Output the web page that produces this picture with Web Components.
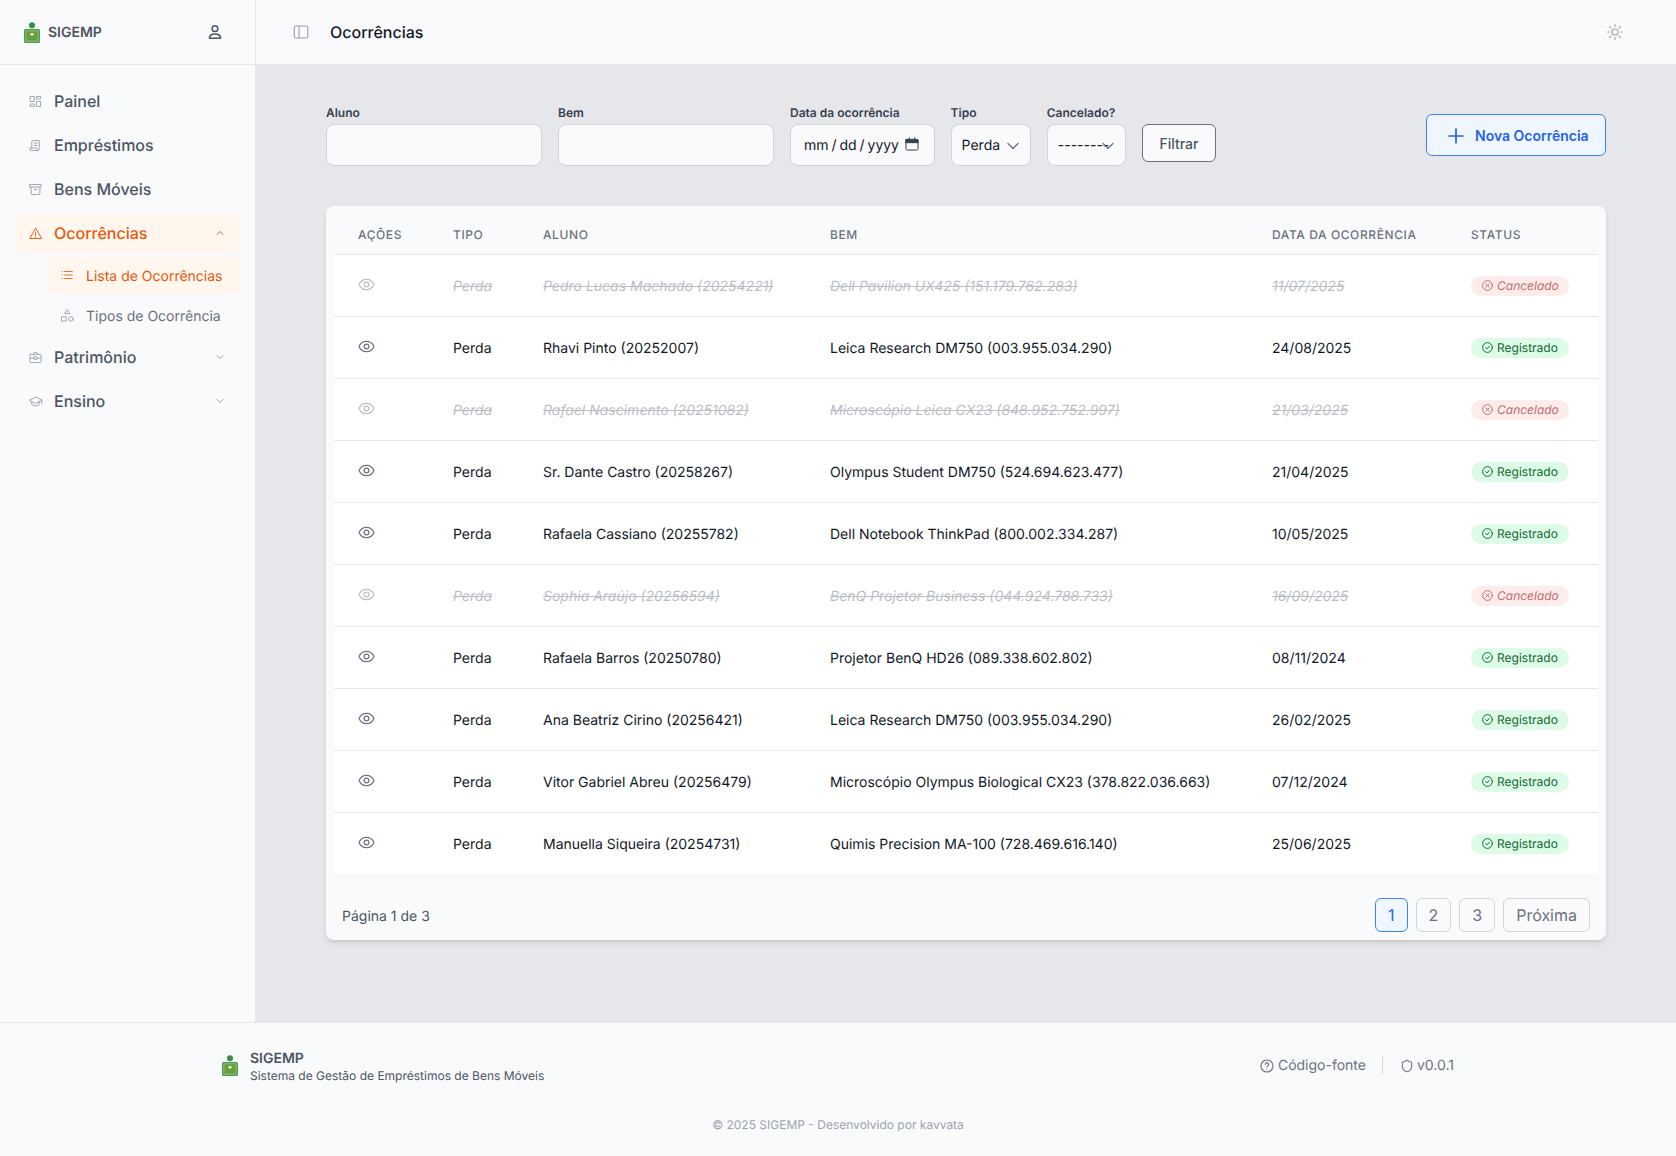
<!DOCTYPE html>
<html lang="pt-BR"><head><meta charset="utf-8"><title>Ocorrências</title>
<style>html,body{margin:0;padding:0;background:#e5e7eb;font-family:Inter,"Liberation Sans",sans-serif;color:#111827;text-rendering:geometricPrecision;-webkit-font-smoothing:antialiased}</style>
</head><body>
<app-shell>
  <side-bar slot="side">
    <nav-item icon="dash">Painel</nav-item>
    <nav-item icon="scroll">Empréstimos</nav-item>
    <nav-item icon="archive">Bens Móveis</nav-item>
    <nav-item icon="alert" active chevron="up">Ocorrências</nav-item>
    <nav-item icon="list" sub active>Lista de Ocorrências</nav-item>
    <nav-item icon="shapes" sub>Tipos de Ocorrência</nav-item>
    <nav-item icon="brief" chevron="down">Patrimônio</nav-item>
    <nav-item icon="cap" chevron="down">Ensino</nav-item>
  </side-bar>
  <top-bar slot="top" heading="Ocorrências"></top-bar>
  <filter-bar></filter-bar>
  <occ-table>
    <occ-row cancelled tipo="Perda" aluno="Pedro Lucas Machado (20254221)" bem="Dell Pavilion UX425 (151.179.762.283)" data="11/07/2025"></occ-row>
    <occ-row tipo="Perda" aluno="Rhavi Pinto (20252007)" bem="Leica Research DM750 (003.955.034.290)" data="24/08/2025"></occ-row>
    <occ-row cancelled tipo="Perda" aluno="Rafael Nascimento (20251082)" bem="Microscópio Leica CX23 (848.952.752.997)" data="21/03/2025"></occ-row>
    <occ-row tipo="Perda" aluno="Sr. Dante Castro (20258267)" bem="Olympus Student DM750 (524.694.623.477)" data="21/04/2025"></occ-row>
    <occ-row tipo="Perda" aluno="Rafaela Cassiano (20255782)" bem="Dell Notebook ThinkPad (800.002.334.287)" data="10/05/2025"></occ-row>
    <occ-row cancelled tipo="Perda" aluno="Sophia Araújo (20256594)" bem="BenQ Projetor Business (044.924.788.733)" data="16/09/2025"></occ-row>
    <occ-row tipo="Perda" aluno="Rafaela Barros (20250780)" bem="Projetor BenQ HD26 (089.338.602.802)" data="08/11/2024"></occ-row>
    <occ-row tipo="Perda" aluno="Ana Beatriz Cirino (20256421)" bem="Leica Research DM750 (003.955.034.290)" data="26/02/2025"></occ-row>
    <occ-row tipo="Perda" aluno="Vitor Gabriel Abreu (20256479)" bem="Microscópio Olympus Biological CX23 (378.822.036.663)" data="07/12/2024"></occ-row>
    <occ-row last tipo="Perda" aluno="Manuella Siqueira (20254731)" bem="Quimis Precision MA-100 (728.469.616.140)" data="25/06/2025"></occ-row>
  </occ-table>
  <app-footer slot="foot"></app-footer>
</app-shell>
<script>
const P={
dash:'<path d="M4 4h6v8H4zM4 16h6v4H4zM14 12h6v8h-6zM14 4h6v4h-6z"/>',
scroll:'<path d="M8 4h10a2 2 0 0 1 0 0v14a2 2 0 0 1-2 2H5a2 2 0 0 1-2-2v-2h11v2a2 2 0 0 0 2 2"/><path d="M8 4a2 2 0 0 0-2 2v10M10 8h5M10 12h5"/>',
archive:'<path d="M3 4h18v4H3zM5 8v11a1 1 0 0 0 1 1h12a1 1 0 0 0 1-1V8M10 12h4"/>',
alert:'<path d="M12 4 2.800 20h18.400zM12 10v5M12 17.600v.4"/>',
list:'<path d="M8 6h13M8 12h13M8 18h13M3.500 6h.5M3.500 12h.5M3.500 18h.5"/>',
shapes:'<path d="M12 3l4 6H8zM3 14h7v7H3z"/><circle cx="17.500" cy="17.500" r="3.500"/>',
brief:'<path d="M9 7V5a1 1 0 0 1 1-1h4a1 1 0 0 1 1 1v2M4 7h16a1 1 0 0 1 1 1v11a1 1 0 0 1-1 1H4a1 1 0 0 1-1-1V8a1 1 0 0 1 1-1zM3 13h6M15 13h6"/><rect x="9.500" y="11" width="5" height="4" rx=".5"/>',
cap:'<path d="M12 5 2 10l10 5 10-5zM6 12v5c2 2.500 10 2.500 12 0v-5M22 10v6"/>',
up:'<path d="m6 15 6-6 6 6"/>',down:'<path d="m6 9 6 6 6-6"/>',
user:'<circle cx="12" cy="7.500" r="3.800"/><path d="M4.500 20.200c0-3.500 2.600-5.700 7.500-5.700s7.500 2.200 7.500 5.700z"/>',
panel:'<rect x="3" y="4" width="18" height="16" rx="2"/><path d="M9.500 4v16"/>',
sun:'<circle cx="12" cy="12" r="4"/><path d="M12 2v2.500M12 19.500V22M2 12h2.500M19.500 12H22M4.900 4.900l1.800 1.800M17.300 17.300l1.800 1.800M4.900 19.100l1.800-1.800M17.300 6.700l1.800-1.800"/>',
eye:'<path d="M2.500 12C4.500 7.500 8 5.500 12 5.500s7.500 2 9.500 6.500c-2 4.500-5.500 6.500-9.500 6.500S4.500 16.500 2.500 12z"/><circle cx="12" cy="12" r="3"/>',
plus:'<path d="M12 3.500v17M3.500 12h17"/>',
xc:'<circle cx="12" cy="12" r="9"/><path d="m9 9 6 6M15 9l-6 6"/>',
ok:'<circle cx="12" cy="12" r="9"/><path d="m8.500 12.300 2.400 2.400 4.600-5"/>',
help:'<circle cx="12" cy="12" r="9"/><path d="M9.500 9.500a2.500 2.500 0 1 1 3.800 2.200c-.9.500-1.300 1-1.300 1.800M12 16.800v.2"/>',
shield:'<path d="M20 13c0 5-3.500 7.500-7.660 8.950a1 1 0 0 1-.67-.01C7.500 20.500 4 18 4 13V6a1 1 0 0 1 1-1c2 0 4.500-1.200 6.240-2.720a1.170 1.170 0 0 1 1.520 0C14.510 3.810 17 5 19 5a1 1 0 0 1 1 1z"/>',
cal:'<rect x="3" y="5" width="18" height="16" rx="2"/><path d="M3 5.500h18V10H3zM8 2.500V5M16 2.500V5" fill="currentColor"/>'
};
function def(name,css,render){
  customElements.define(name,class extends HTMLElement{
    connectedCallback(){
      if(this.shadowRoot)return;
      this.attachShadow({mode:'open'}).innerHTML='<style>'+css+'</style>'+render(this);
    }
  });
}
const a=(e,n)=>e.getAttribute(n)||'';
def('ui-icon',':host{display:inline-flex;flex:none;align-items:center;justify-content:center}svg{display:block;fill:none;stroke:currentColor;stroke-linecap:round;stroke-linejoin:round}',
 e=>{const s=a(e,'size')||16;return `<svg width="${s}" height="${s}" viewBox="0 0 24 24" stroke-width="${a(e,'w')||1.5}">${P[a(e,'name')]}</svg>`});
def('logo-mark',':host{display:inline-flex;flex:none}svg{display:block}',
 ()=>`<svg width="16" height="21" viewBox="0 0 16 21"><circle cx="8" cy="3.200" r="3" fill="#388e3c"/><rect x="0" y="7" width="16" height="14" rx="1.500" fill="#4c9a50"/><rect x="1.500" y="8.500" width="13" height="11" fill="#a9cfa6"/><rect x="2.200" y="9.200" width="11.600" height="9.600" fill="#689f38"/><rect x="6.500" y="11" width="3" height="2.500" fill="#e6efd8"/></svg>`);
def('app-shell',':host{display:flex;flex-direction:column;min-height:1156px}.mid{display:flex;height:1022px}.main{flex:1;min-width:0;display:flex;flex-direction:column}.body{padding:41px 70px 0;display:flex;flex-direction:column;gap:41px}',
 ()=>`<div class="mid"><slot name="side"></slot><div class="main"><slot name="top"></slot><div class="body"><slot></slot></div></div></div><slot name="foot"></slot>`);
def('side-bar',':host{display:flex;flex-direction:column;width:256px;flex:none;box-sizing:border-box;background:#f9fafb;border-right:1px solid #e5e7eb}.brand{height:64px;border-bottom:1px solid #e5e7eb;display:flex;align-items:center;padding:0 16px 0 24px;gap:8px;box-sizing:content-box;font:600 14px/20px Inter,sans-serif;color:#4b5563}.brand span{flex:1;padding-top:2px}.user{color:#4b5563;margin-right:15px}nav{padding:16px 15px 0 16px;display:flex;flex-direction:column;gap:4px}',
 ()=>`<div class="brand"><logo-mark></logo-mark><span>SIGEMP</span><ui-icon class="user" name="user" size="18" w="2"></ui-icon></div><nav><slot></slot></nav>`);
def('nav-item',':host{display:flex;align-items:center;height:40px;padding:0 12px;gap:10px;border-radius:8px;font:500 16px/24px Inter,sans-serif;color:#4b5563;box-sizing:border-box}:host([sub]){margin-left:32px;height:36px;font-size:14px;font-weight:400;color:#6b7280}:host([sub]) .t{padding-top:3px}:host([active]){background:#fff7ed;color:#ea580c}.i{color:#9ca3af;width:16px;justify-content:center;margin-left:-1px;margin-right:1px}:host([active]) .i{color:#ea580c}.t{flex:1}.c{color:#9ca3af;margin-right:2px}:host([active]) .c{color:#ea580c}',
 e=>`<ui-icon class="i" name="${a(e,'icon')}" size="${a(e,'icon')=='list'?14:15}"></ui-icon><span class="t"><slot></slot></span>${a(e,'chevron')?`<ui-icon class="c" name="${a(e,'chevron')}" size="12" w="2"></ui-icon>`:''}`);
def('top-bar',':host{display:flex;align-items:center;height:64px;background:#f9fafb;padding:0 52px 0 36px;gap:20px;font:500 16px/24px Inter,sans-serif;color:#111827}h1{flex:1;margin:0;font:inherit}.p,.s{color:#9ca3af}',
 e=>`<ui-icon class="p" name="panel" size="18"></ui-icon><h1>${a(e,'heading')}</h1><ui-icon class="s" name="sun" size="18"></ui-icon>`);
def('form-field',':host{display:flex;flex-direction:column;gap:3px;font:400 14px/20px Inter,sans-serif;color:#111827}label{font:600 12px/16px Inter,sans-serif;color:#374151}.box{display:flex;align-items:center;height:42px;box-sizing:border-box;border:1px solid #d1d5db;border-radius:8px;background:#f9fafb;padding:1px 0 0 10px;position:relative}input{all:unset;flex:1;min-width:0;font:inherit}',
 e=>`<label>${a(e,'label')}</label><div class="box" style="width:${a(e,'w')}px"><slot><input aria-label="${a(e,'label')}"></slot></div>`);
def('fake-date',':host{display:flex;flex:1;align-items:center;padding-left:3px;gap:5px;white-space:nowrap;word-spacing:-1px}ui-icon{color:#374151;margin-top:-4px}',
 ()=>`<span>mm / dd / yyyy</span><ui-icon name="cal" size="16"></ui-icon>`);
def('fake-select',':host{display:block;flex:1;position:relative;white-space:nowrap;overflow:hidden}ui-icon{position:absolute;top:50%;margin-top:-10px;color:#6b7280}',
 e=>`<span>${a(e,'value')}</span><ui-icon name="down" size="20" style="right:${a(e,'chev')}px"></ui-icon>`);
def('filter-bar',':host{display:flex;justify-content:space-between;align-items:center;height:61px}.f{display:flex;gap:16px;align-items:flex-start}.btn{margin-top:19px;height:38px;box-sizing:border-box;width:74px;border:1px solid #6b7280;border-radius:6px;background:#f9fafb;color:#4b5563;font:500 14px/20px Inter,sans-serif;cursor:pointer;padding:2px 0 0}.new{height:42px;width:180px;box-sizing:border-box;border:1px solid #3b82f6;border-radius:6px;background:#eff6ff;color:#2563eb;font:600 14px/20px Inter,sans-serif;display:flex;align-items:center;justify-content:flex-start;padding:2px 0 0 19px;gap:9px;margin-top:-1px}.new ui-icon{color:#2563eb}',
 ()=>`<div class="f"><form-field label="Aluno" w="216"></form-field><form-field label="Bem" w="216"></form-field><form-field label="Data da ocorrência" w="144.6"><fake-date></fake-date></form-field><form-field label="Tipo" w="80.2"><fake-select value="Perda" chev="7"></fake-select></form-field><form-field label="Cancelado?" w="79.2"><fake-select value="--------" chev="7"></fake-select></form-field><button class="btn">Filtrar</button></div><button class="new"><ui-icon name="plus" size="20" w="2"></ui-icon>Nova Ocorrência</button>`);
const GRID='display:grid;grid-template-columns:95px 90px 287px 442px 199px 1fr;';
def('occ-table',':host{display:block;background:#f9fafb;border-radius:8px;box-shadow:0 4px 6px -1px rgba(0,0,0,.1),0 2px 4px -2px rgba(0,0,0,.1);padding:8px 8px 8px;margin-top:-1px}.h{'+GRID+'height:40px;align-items:center;border-bottom:1px solid #e5e7eb;font:500 12px/16px Inter,sans-serif;letter-spacing:.6px;color:#6b7280;text-transform:uppercase}.h span{padding:2px 0 0 24px}.p{display:flex;align-items:center;justify-content:space-between;padding:24px 8px 0 8px;font:400 14px/20px Inter,sans-serif;color:#4b5563}.p>span{padding-top:3px}.b{display:flex;gap:8px}',
 ()=>`<div class="h"><span>Ações</span><span>Tipo</span><span>Aluno</span><span>Bem</span><span>Data da ocorrência</span><span>Status</span></div><slot></slot><div class="p"><span>Página 1 de 3</span><div class="b"><page-button active>1</page-button><page-button>2</page-button><page-button>3</page-button><page-button>Próxima</page-button></div></div>`);
def('page-button',':host{display:flex;align-items:center;height:34px;box-sizing:border-box;padding:0 12px;border:1px solid #d1d5db;border-radius:6px;font:400 16px/24px Inter,sans-serif;color:#6b7280}:host([active]){border-color:#3b82f6;background:#eff6ff;color:#2563eb}',()=>`<slot></slot>`);
def('occ-row',':host{'+GRID+'height:62px;box-sizing:border-box;background:#fff;align-items:center;border-bottom:1px solid #e5e7eb;font:400 14px/20px Inter,sans-serif;color:#111827}:host([last]){height:61px;border-bottom:0}.c{padding-left:24px;white-space:nowrap}.txt{padding-top:2px}.st{display:flex}.e{color:#6b7280;display:flex;margin-top:-3px;margin-left:-1px}:host([cancelled]) .txt,:host([cancelled]) .e{opacity:.45}:host([cancelled]) .txt{color:#6b7280;font-style:italic;text-decoration:line-through}',
 e=>{const x=e.hasAttribute('cancelled');return `<div class="c e"><ui-icon name="eye" size="19"></ui-icon></div><div class="c txt">${a(e,'tipo')}</div><div class="c txt">${a(e,'aluno')}</div><div class="c txt">${a(e,'bem')}</div><div class="c txt">${a(e,'data')}</div><div class="c st"><status-badge ${x?'cancelled':''}>${x?'Cancelado':'Registrado'}</status-badge></div>`});
def('status-badge',':host{display:inline-flex;align-items:center;height:20px;width:98px;box-sizing:border-box;padding:1px 10px 0;gap:3px;border-radius:999px;background:#dcfce7;color:#166534;font:400 12px/16px Inter,sans-serif}:host([cancelled]){background:#fdecec;color:#c76a6a;font-style:italic}ui-icon{margin-top:-1px}',
 e=>`<ui-icon name="${e.hasAttribute('cancelled')?'xc':'ok'}" size="13" w="1.8"></ui-icon><slot></slot>`);
def('app-footer',':host{display:block;background:#f9fafb;height:134px;box-sizing:border-box;border-top:1px solid #e5e7eb;font:400 14px/20px Inter,sans-serif;color:#6b7280}.t{height:76px;box-sizing:border-box;border-bottom:1px solid #f3f4f6}.w{width:1232px;margin:0 auto;height:100%;display:flex;align-items:center;gap:12px;padding-top:12px;box-sizing:border-box}logo-mark{margin-top:-2px}.n{flex:1;display:flex;flex-direction:column}.n b{font:600 14px/19px Inter,sans-serif;color:#4b5563}.n small{font:400 12px/16px Inter,sans-serif;color:#4b5563}.l{display:flex;align-items:center;gap:3px;margin-top:-2px}.d{width:1px;height:17px;background:#d1d5db;margin:-2px 5px 0 4px}.c{text-align:center;font:400 12px/16px Inter,sans-serif;color:#9ca3af;padding-top:18px}',
 ()=>`<div class="t"><div class="w"><logo-mark></logo-mark><div class="n"><b>SIGEMP</b><small>Sistema de Gestão de Empréstimos de Bens Móveis</small></div><span class="l"><ui-icon name="help" size="16" w="1.7"></ui-icon>Código-fonte</span><span class="d"></span><span class="l"><ui-icon name="shield" size="14" w="1.8"></ui-icon>v0.0.1</span></div></div><div class="c">© 2025 SIGEMP - Desenvolvido por kavvata</div>`);
</script>
</body></html>
